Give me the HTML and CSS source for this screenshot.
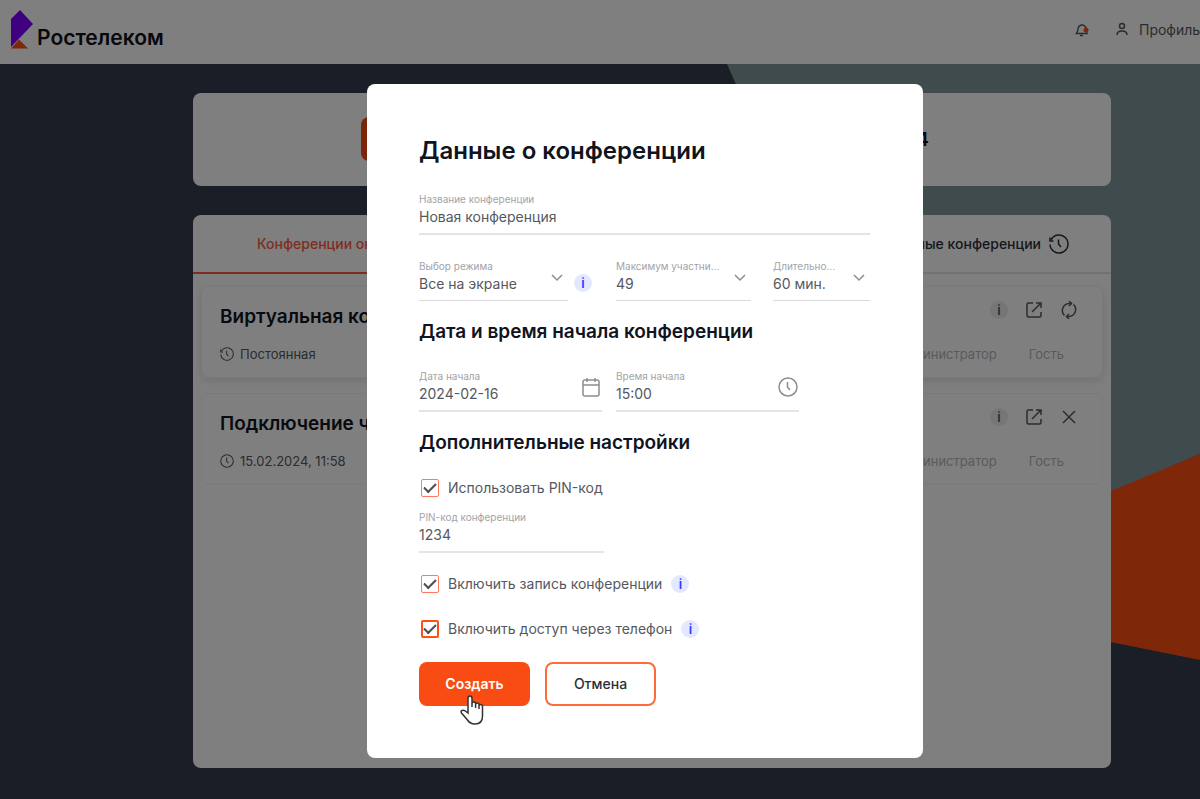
FILE: index.html
```
<!DOCTYPE html>
<html lang="ru">
<head>
    <meta charset="UTF-8">
    <meta name="viewport" content="width=device-width, initial-scale=1.0">
    <title>Данные о конференции</title>
    <link rel="stylesheet" href="styles.css">
</head>
<body>
    <svg class="icon-set" aria-hidden="true">
        <symbol id="clock" viewBox="0 0 20 20">
            <circle cx="10" cy="10" r="9"/>
            <path d="M9.5 5v5l2.5 3"/>
        </symbol>
        <symbol id="history" viewBox="0 0 20 20">
            <path d="M2 5.8A9 9 0 1 1 1 10.5"/>
            <path d="M1 3.5v3.5h3.5"/>
            <path d="M9.5 5.5V10l2.5 3"/>
        </symbol>
        <symbol id="external" viewBox="0 0 18 18">
            <path d="M8 2H3.500Q2 2 2 3.500v11Q2 16 3.500 16h11q1.500 0 1.500-1.500V11"/>
            <path d="M7 11l9-9M11 2h5v5"/>
        </symbol>
        <symbol id="refresh" viewBox="0 0 18 18">
            <path d="M4.500 14.500A7 7 0 0 1 9 2.500h2"/>
            <path d="M9 0l2.500 2.500L9 5"/>
            <path d="M13.500 3.500A7 7 0 0 1 9 15.500H7"/>
            <path d="M9 18l-2.500-2.500L9 13"/>
        </symbol>
        <symbol id="close" viewBox="0 0 18 18">
            <path d="M3 3l12 12M15 3L3 15"/>
        </symbol>
        <symbol id="chevron" viewBox="0 0 12 8">
            <path d="M1 1l5 5 5-5"/>
        </symbol>
        <symbol id="calendar" viewBox="0 0 18 20">
            <rect x="1" y="3" width="16" height="16" rx="2"/>
            <path d="M1 8h16M5 1v4M13 1v4"/>
        </symbol>
    </svg>

    <header class="header">
        <a class="logo" href="#">
            <svg class="logo-mark" viewBox="0 0 24 40" aria-hidden="true">
                <path d="M1 10L10 1l13 14L1 38z" fill="#7f00ff"/>
                <path d="M1 39.5l8-9 9 9z" fill="#ff4f12"/>
            </svg>
            <span>Ростелеком</span>
        </a>
        <nav class="user-nav">
            <button class="bell" type="button" aria-label="Уведомления">
                <svg viewBox="0 0 14 14" aria-hidden="true">
                    <path d="M1.500 10.500q1.500-2 1.500-5Q4 2 7 2t4 3q0 3 1 5.500zM5 12.500h3"/>
                    <circle cx="11" cy="7" r="2.500"/>
                </svg>
            </button>
            <a class="profile" href="#">
                <svg viewBox="0 0 12 14" aria-hidden="true">
                    <circle cx="6" cy="4" r="2.500"/>
                    <path d="M1 13q0-4 5-4t5 4"/>
                </svg>
                Профиль
            </a>
        </nav>
    </header>

    <main class="main">
        <svg class="backdrop" viewBox="0 0 1200 735" preserveAspectRatio="none" aria-hidden="true">
            <path d="M727 0h473v390L947 500z" fill="#80969c"/>
            <path d="M947 495l253-105v206l-253-51z" fill="#ff4f12"/>
        </svg>

        <section class="panel summary">
            <button class="btn btn-primary" type="button" aria-label="Создать конференцию"></button>
            <span class="summary-date">16.02.2024</span>
        </section>

        <section class="panel conferences">
            <nav class="tabs">
                <a class="tab tab-active" href="#">Конференции онлайн</a>
                <a class="tab tab-last" href="#">Завершенные конференции
                    <svg class="icon"><use href="#history"/></svg>
                </a>
            </nav>

            <article class="conf conf-raised">
                <div class="conf-row conf-top">
                    <h2>Виртуальная комната</h2>
                    <div class="conf-actions">
                        <button class="info info-grey" type="button" aria-label="Информация">i</button>
                        <button type="button" aria-label="Открыть"><svg class="icon"><use href="#external"/></svg></button>
                        <button type="button" aria-label="Обновить"><svg class="icon"><use href="#refresh"/></svg></button>
                    </div>
                </div>
                <div class="conf-row conf-meta">
                    <span class="conf-time"><svg class="icon"><use href="#history"/></svg>Постоянная</span>
                    <span class="conf-roles"><span>Администратор</span><span>Гость</span></span>
                </div>
            </article>

            <article class="conf">
                <div class="conf-row conf-top">
                    <h2>Подключение через</h2>
                    <div class="conf-actions">
                        <button class="info info-grey" type="button" aria-label="Информация">i</button>
                        <button type="button" aria-label="Открыть"><svg class="icon"><use href="#external"/></svg></button>
                        <button type="button" aria-label="Удалить"><svg class="icon"><use href="#close"/></svg></button>
                    </div>
                </div>
                <div class="conf-row conf-meta">
                    <span class="conf-time"><svg class="icon"><use href="#clock"/></svg>15.02.2024, 11:58</span>
                    <span class="conf-roles"><span>Администратор</span><span>Гость</span></span>
                </div>
            </article>
        </section>
    </main>

    <div class="overlay">
        <form class="modal" role="dialog" aria-labelledby="modal-title">
            <h1 id="modal-title">Данные о конференции</h1>

            <div class="field field-thick">
                <label for="name">Название конференции</label>
                <input type="text" id="name" value="Новая конференция">
            </div>

            <div class="row row-modes">
                <div class="field">
                    <label for="mode">Выбор режима</label>
                    <select id="mode">
                        <option>Все на экране</option>
                    </select>
                    <svg class="icon chevron"><use href="#chevron"/></svg>
                </div>
                <button class="info" type="button" aria-label="О режимах">i</button>
                <div class="field">
                    <label for="limit">Максимум участников</label>
                    <select id="limit">
                        <option>49</option>
                    </select>
                    <svg class="icon chevron"><use href="#chevron"/></svg>
                </div>
                <div class="field">
                    <label for="duration">Длительность</label>
                    <select id="duration">
                        <option>60 мин.</option>
                    </select>
                    <svg class="icon chevron"><use href="#chevron"/></svg>
                </div>
            </div>

            <h2>Дата и время начала конференции</h2>
            <div class="row row-dates">
                <div class="field field-thick">
                    <label for="date">Дата начала</label>
                    <input type="text" id="date" value="2024-02-16">
                    <svg class="icon field-icon"><use href="#calendar"/></svg>
                </div>
                <div class="field field-thick">
                    <label for="time">Время начала</label>
                    <input type="text" id="time" value="15:00">
                    <svg class="icon field-icon"><use href="#clock"/></svg>
                </div>
            </div>

            <h2>Дополнительные настройки</h2>
            <div class="check">
                <input type="checkbox" id="use-pin" checked>
                <label for="use-pin">Использовать PIN-код</label>
            </div>
            <div class="field field-thick field-pin">
                <label for="pin">PIN-код конференции</label>
                <input type="text" id="pin" value="1234">
            </div>
            <div class="check">
                <input type="checkbox" id="record" checked>
                <label for="record">Включить запись конференции</label>
                <button class="info" type="button" aria-label="О записи">i</button>
            </div>
            <div class="check">
                <input class="current" type="checkbox" id="phone" checked>
                <label for="phone">Включить доступ через телефон</label>
                <button class="info" type="button" aria-label="О доступе через телефон">i</button>
            </div>

            <div class="buttons">
                <button class="btn btn-primary" type="button">Создать</button>
                <button class="btn btn-outline" type="button">Отмена</button>
                <svg class="pointer" viewBox="0 0 24 30" aria-hidden="true">
                    <path d="M8 18V3.500Q8 1 10 1t2 2.500V12V8.500q0-1.500 1.800-1.500t1.800 1.500V13V9.500q0-1.500 1.700-1.500T19 9.500V14v-3q0-1.500 1.500-1.500T22.500 11v10q0 8-7.500 8-5 0-7.500-4L1.500 18q-1-2 .5-2.500 2-1 4 1z"/>
                </svg>
            </div>
        </form>
    </div>
</body>
</html>
```

FILE: styles.css
```
* {
    box-sizing: border-box;
}
body {
    margin: 0;
    min-height: 100vh;
    display: flex;
    flex-direction: column;
    overflow: hidden;
    font-family: Inter, "Noto Sans", sans-serif;
    font-size: 14px;
    color: #555860;
    background-color: #fff;
}
h1, h2 {
    margin: 0;
    font-weight: 600;
    color: #101420;
}
a {
    color: inherit;
    text-decoration: none;
}
button, input, select {
    font: inherit;
    color: inherit;
}
button {
    padding: 0;
    border: none;
    background: none;
    cursor: pointer;
}
svg {
    display: block;
    flex-shrink: 0;
}
.icon-set {
    position: absolute;
    width: 0;
    height: 0;
}
.icon {
    width: 18px;
    height: 18px;
    fill: none;
    stroke: currentColor;
    stroke-width: 1.5;
}

/* header */
.header {
    display: flex;
    justify-content: space-between;
    height: 64px;
    padding: 8px 0 8px 10px;
}
.logo {
    display: flex;
    align-items: center;
    gap: 3px;
    height: 42px;
    font-size: 21px;
    font-weight: 600;
    color: #101018;
}
.logo span {
    padding-top: 16px;
}
.logo-mark {
    width: 24px;
    height: 42px;
}
.user-nav {
    display: flex;
    align-items: center;
    gap: 26px;
    height: 44px;
    white-space: nowrap;
}
.user-nav svg {
    width: 14px;
    height: 14px;
    fill: none;
    stroke: #555860;
    stroke-width: 1.5;
}
.user-nav .bell circle {
    fill: #ff4f12;
    stroke: none;
}
.profile {
    display: flex;
    align-items: center;
    gap: 10px;
    width: 85px;
    padding-bottom: 2px;
}

/* page */
.main {
    position: relative;
    flex: 1;
    display: flex;
    flex-direction: column;
    gap: 29px;
    padding: 29px 89px 31px 193px;
    background-color: #343c4c;
}
.backdrop {
    position: absolute;
    inset: 0;
    width: 100%;
    height: 100%;
}
.panel {
    position: relative;
    border-radius: 8px;
    background-color: #fff;
}
.summary {
    display: flex;
    justify-content: space-between;
    align-items: center;
    padding: 24px 182px 25px 168px;
}
.summary-date {
    font-size: 19px;
    font-weight: 600;
    color: #101420;
}
.conferences {
    flex: 1;
}
.tabs {
    display: flex;
    margin-bottom: 12px;
}
.tab {
    flex: 1;
    display: flex;
    align-items: center;
    height: 59px;
    padding: 0 42px 0 64px;
    border-bottom: 2px solid #e5e5e8;
    font-weight: 500;
    color: #2c2f38;
}
.tab-active {
    color: #ff5a40;
    border-color: #ff5a40;
}
.tab-last {
    justify-content: flex-end;
    gap: 8px;
}
.tab .icon {
    width: 20px;
    height: 20px;
}
.conf {
    margin: 0 8px 15px;
    padding: 14px 24px 14px 18px;
    border: 1px solid #f4f4f5;
    border-radius: 8px;
}
.conf-raised {
    box-shadow: 0 3px 10px rgba(0, 0, 0, 0.12);
}
.conf-row {
    display: flex;
    justify-content: space-between;
}
.conf-top {
    height: 30px;
    align-items: center;
    margin-bottom: 14px;
}
.conf-top h2 {
    font-size: 19px;
}
.conf-actions {
    display: flex;
    gap: 17px;
    align-self: flex-start;
}
.conf-meta {
    height: 18px;
    align-items: center;
    padding-right: 14px;
    font-size: 13px;
}
.conf-time {
    display: flex;
    align-items: center;
    gap: 6px;
}
.conf-time .icon {
    width: 14px;
    height: 14px;
}
.conf-roles {
    display: flex;
    gap: 32px;
    color: #b5b5b8;
}

/* modal */
.overlay {
    position: fixed;
    inset: 0;
    display: flex;
    justify-content: center;
    align-items: flex-start;
    padding: 84px 0 0 90px;
    background-color: rgba(0, 0, 0, 0.5);
}
.modal {
    width: 100%;
    max-width: 556px;
    padding: 51px 53px 52px 52px;
    border-radius: 8px;
    background-color: #fff;
}
.modal h1 {
    margin-bottom: 25px;
    font-size: 24px;
    line-height: 32px;
}
.modal h2 {
    font-size: 19px;
    line-height: 24px;
}
.field {
    position: relative;
    min-width: 0;
    border-bottom: 1px solid #d9d9dc;
}
.field-thick {
    border-bottom: 2px solid #e4e4e7;
}
.field label {
    display: block;
    overflow: hidden;
    padding-right: 31px;
    font-size: 10px;
    line-height: 14px;
    white-space: nowrap;
    text-overflow: ellipsis;
    color: #a3a3a8;
}
.field input, .field select {
    display: block;
    width: 100%;
    height: 27px;
    padding: 0 0 7px;
    border: none;
    outline: none;
    background: none;
    font-size: 14px;
    appearance: none;
}
.field .chevron {
    position: absolute;
    right: 5px;
    top: 15px;
    width: 12px;
    height: 8px;
    color: #8c8c92;
    pointer-events: none;
}
.field .field-icon {
    position: absolute;
    right: 1px;
    top: 8px;
    width: 20px;
    height: 20px;
    color: #8c8c92;
}
.row {
    display: grid;
}
.row-modes {
    grid-template-columns: 149fr 48px 135fr 22px 97fr;
    margin: 24px 0 19px;
}
.row-modes .info {
    margin: 15px 0 0 6px;
}
.row-modes .field:last-child {
    grid-column: 5;
}
.row-dates {
    grid-template-columns: 183px 183px;
    gap: 14px;
    margin: 25px 0 19px;
}
.info {
    width: 18px;
    height: 18px;
    border-radius: 50%;
    font-size: 13px;
    font-weight: 600;
    line-height: 18px;
    color: #2b3cff;
    background-color: #e4e8ff;
}
.info-grey {
    color: #555860;
    background-color: #ececef;
}
.check {
    display: flex;
    align-items: center;
    height: 24px;
    margin-top: 21px;
    padding-left: 2px;
}
.check label {
    margin: 0 9px;
    padding-bottom: 2px;
}
.check input {
    display: grid;
    place-items: center;
    width: 18px;
    height: 18px;
    margin: 0;
    border: 1px solid #ff7a5c;
    border-radius: 2px;
    appearance: none;
}
.check input:checked::after {
    content: "";
    width: 10px;
    height: 5px;
    margin-bottom: 3px;
    border-left: 2px solid #4a4d55;
    border-bottom: 2px solid #4a4d55;
    transform: rotate(-45deg);
}
.check .current {
    border: 2px solid #ff4f12;
}
.field-pin {
    width: 185px;
    margin-top: 10px;
}
.field-pin + .check {
    margin-top: 19px;
}
.buttons {
    position: relative;
    display: flex;
    gap: 15px;
    margin-top: 21px;
}
.btn {
    width: 111px;
    height: 44px;
    padding-bottom: 2px;
    border-radius: 8px;
    font-weight: 500;
}
.btn-primary {
    font-weight: 600;
    color: #fff;
    background-color: #f84c12;
}
.btn-outline {
    border: 2px solid #ff6a3c;
    color: #2c2f38;
}
.pointer {
    position: absolute;
    left: 41px;
    top: 33px;
    width: 24px;
    height: 30px;
    fill: #fff;
    stroke: #333;
    stroke-width: 1.5;
}
```
